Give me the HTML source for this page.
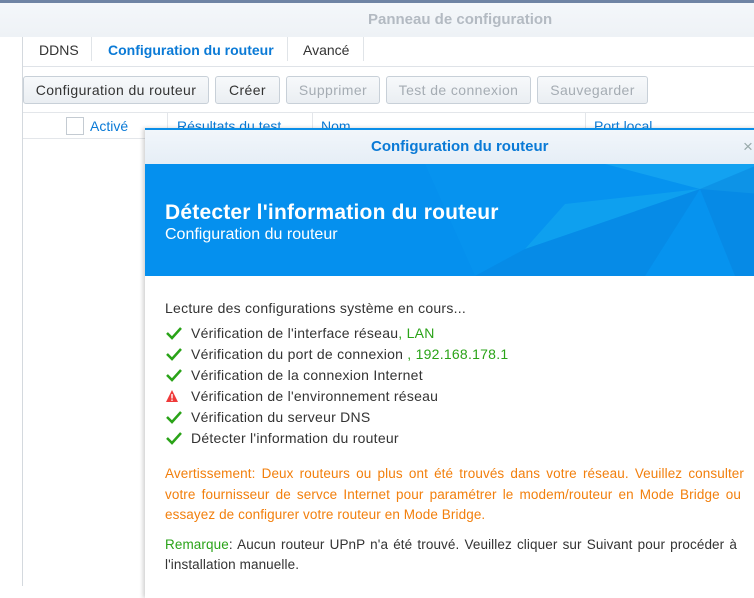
<!DOCTYPE html>
<html><head><meta charset="utf-8"><style>
*{margin:0;padding:0;box-sizing:border-box}
body{width:754px;height:586px;overflow:hidden;background:#fff;font-family:"Liberation Sans",sans-serif;position:relative;color:#333}
.abs{position:absolute}
.topline{left:0;top:0;width:754px;height:3px;background:#6f84a4}
.titlebar{left:0;top:3px;width:754px;height:34px;background:linear-gradient(#f4f7fa,#eef2f6)}
.title{left:368px;top:11px;font-size:15px;font-weight:bold;color:#b3bac2}
.vline{left:22px;top:37px;width:1px;height:549px;background:#d4d9de}
.tabs{left:23px;top:37px;width:731px;height:30px;border-bottom:1px solid #dfe3e8}
.tab{position:absolute;top:4px;font-size:14px;color:#333}
.sep{position:absolute;top:0;width:1px;height:24px;background:#e0e4e8}
.btn{position:absolute;top:76px;height:28px;border:1px solid #c8d0d8;border-radius:3px;background:linear-gradient(#f7f9fb,#eaeef2);font-size:14px;text-align:center;line-height:26px;letter-spacing:.4px}
.dis{color:#a5acb3}
.hdr{left:23px;top:112px;width:731px;height:27px;border-bottom:1px solid #e3e6ea;border-top:1px solid #e3e6ea}
.hdr .abs{font-size:14px}
.dialog{left:145px;top:128px;width:615px;height:470px;background:#fff;border-top:2px solid #0a8ee8;box-shadow:-2px 0 4px rgba(0,0,0,.18)}
.dtitle{position:absolute;left:0;top:0;width:100%;height:34px;background:linear-gradient(#f1f6fb,#e6eef6);font-size:15px;font-weight:bold;color:#0a7ad6;line-height:34px}
.banner{position:absolute;left:0;top:34px;width:100%;height:112px;background:#0590ee;overflow:hidden}
.content{position:absolute;left:20px;top:168px;font-size:14px;letter-spacing:.25px;color:#333}
.row{height:21px;display:flex;align-items:center}
.row svg{margin-right:8px}
.g{color:#2aa318}
.o{color:#f27f0c}
.ln{height:20.5px;line-height:20.5px;font-size:13.5px;letter-spacing:.1px;white-space:nowrap;overflow:hidden}
.j{text-align:justify;text-align-last:justify}
</style></head><body>
<div class="abs topline"></div>
<div class="abs titlebar"></div>
<div class="abs title">Panneau de configuration</div>
<div class="abs vline"></div>
<div class="abs tabs">
 <div class="tab" style="left:16px;top:5px">DDNS</div>
 <div class="sep" style="left:68px"></div>
 <div class="tab" style="left:85px;top:5px;color:#0a7ad6;font-weight:bold">Configuration du routeur</div>
 <div class="sep" style="left:264px"></div>
 <div class="tab" style="left:280px;top:5px">Avancé</div>
 <div class="sep" style="left:340px"></div>
</div>
<div class="btn" style="left:23px;width:186px">Configuration du routeur</div>
<div class="btn" style="left:215px;width:65px">Créer</div>
<div class="btn dis" style="left:286px;width:94px">Supprimer</div>
<div class="btn dis" style="left:386px;width:145px">Test de connexion</div>
<div class="btn dis" style="left:537px;width:111px">Sauvegarder</div>
<div class="abs hdr">
 <div class="abs" style="left:43px;top:4px;width:18px;height:18px;border:1px solid #c4cbd2;background:#fff"></div>
 <div class="abs" style="left:67px;top:5px;color:#0a7ad6">Activé</div>
 <div class="abs" style="left:144px;top:0;width:1px;height:26px;background:#e3e6ea"></div>
 <div class="abs" style="left:154px;top:5px;color:#0a7ad6">Résultats du test</div>
 <div class="abs" style="left:289px;top:0;width:1px;height:26px;background:#e3e6ea"></div>
 <div class="abs" style="left:298px;top:5px;color:#0a7ad6">Nom</div>
 <div class="abs" style="left:562px;top:0;width:1px;height:26px;background:#e3e6ea"></div>
 <div class="abs" style="left:571px;top:5px;color:#0a7ad6">Port local</div>
</div>
<div class="abs dialog">
 <div class="dtitle"><span style="position:absolute;left:226px">Configuration du routeur</span></div>
 <div class="abs" style="left:598px;top:7px;font-size:17px;color:#9aa">×</div>
 <div class="banner">
  <svg width="615" height="112" style="position:absolute;left:0;top:0">
   <polygon points="280,0 615,0 615,112 330,112" fill="#0896ef" opacity=".5"/>
   <polygon points="460,0 615,0 615,30 555,25" fill="#28b8f5" opacity=".4"/>
   <polygon points="555,25 615,0 615,112 590,112" fill="#0680dc" opacity=".45"/>
   <polygon points="380,85 555,25 500,112 330,112" fill="#0684e0" opacity=".5"/>
   <polygon points="420,40 555,25 380,85" fill="#1bb5f0" opacity=".4"/>
  </svg>
  <div class="abs" style="left:20px;top:37px;font-size:21px;font-weight:bold;color:#fff;letter-spacing:.2px">Détecter l'information du routeur</div>
  <div class="abs" style="left:20px;top:62px;font-size:16px;color:#fff">Configuration du routeur</div>
 </div>
 <div class="content">
  <div style="height:24px;padding-top:2px">Lecture des configurations système en cours...</div>
  <div class="row"><svg width="18" height="14"><path d="M2 7l5 5 9-10" stroke="#2aa318" stroke-width="2.5" fill="none"/></svg>Vérification de l'interface réseau<span class="g">, LAN</span></div>
  <div class="row"><svg width="18" height="14"><path d="M2 7l5 5 9-10" stroke="#2aa318" stroke-width="2.5" fill="none"/></svg>Vérification du port de connexion <span class="g">&nbsp;, 192.168.178.1</span></div>
  <div class="row"><svg width="18" height="14"><path d="M2 7l5 5 9-10" stroke="#2aa318" stroke-width="2.5" fill="none"/></svg>Vérification de la connexion Internet</div>
  <div class="row"><svg width="18" height="14"><polygon points="7,1 13,13 1,13" fill="#ef3a3a"/><rect x="6.3" y="5" width="1.4" height="4.5" fill="#fff"/><rect x="6.3" y="10.5" width="1.4" height="1.4" fill="#fff"/></svg>Vérification de l'environnement réseau</div>
  <div class="row"><svg width="18" height="14"><path d="M2 7l5 5 9-10" stroke="#2aa318" stroke-width="2.5" fill="none"/></svg>Vérification du serveur DNS</div>
  <div class="row"><svg width="18" height="14"><path d="M2 7l5 5 9-10" stroke="#2aa318" stroke-width="2.5" fill="none"/></svg>Détecter l'information du routeur</div>
  <div class="o" style="margin-top:16px">
   <div class="ln j" style="width:579px">Avertissement: Deux routeurs ou plus ont été trouvés dans votre réseau. Veuillez consulter</div>
   <div class="ln j" style="width:576px">votre fournisseur de servce Internet pour paramétrer le modem/routeur en Mode Bridge ou</div>
   <div class="ln" style="width:590px">essayez de configurer votre routeur en Mode Bridge.</div>
  </div>
  <div style="margin-top:9px">
   <div class="ln j" style="width:572px"><span class="g">Remarque</span>: Aucun routeur UPnP n'a été trouvé. Veuillez cliquer sur Suivant pour procéder à</div>
   <div class="ln" style="width:590px">l'installation manuelle.</div>
  </div>
 </div>
</div>
</body></html>
